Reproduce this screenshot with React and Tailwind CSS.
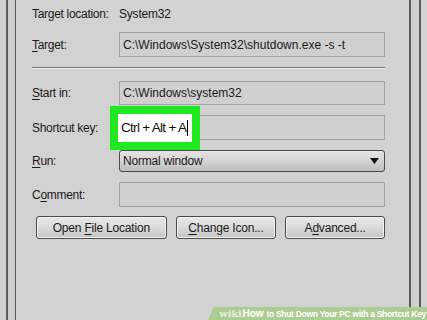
import React from 'react';

const FONT = { fontFamily: '"Liberation Sans", Arial, sans-serif' };

const Field = ({ children, className = '' }) => (
  <div className={`flex h-full w-[266px] items-center border border-[#a2a2a2] bg-[#d0d0d0] pl-[3px] text-[12px] text-[#1a1a1a] ${className}`}>
    {children}
  </div>
);

const Label = ({ children }) => (
  <div className="w-[87px] shrink-0 text-[12px] tracking-[-0.3px] text-[#1a1a1a]">{children}</div>
);

const Btn = ({ w, children }) => (
  <div
    className={`flex h-[23px] ${w} items-center justify-center rounded-[3px] border border-[#4a4a4a] bg-gradient-to-b from-[#e9e9e9] via-[#dadada] to-[#c4c4c4] text-[12px] tracking-[-0.2px] text-[#1a1a1a] shadow-[inset_0_0_0_1px_#f2f2f2]`}
  >
    <span>{children}</span>
  </div>
);

export default function App() {
  return (
    <div className="relative flex h-[320px] w-[427px] overflow-hidden bg-[#d2d2d2]" style={FONT}>
      {/* left window frame */}
      <div className="flex h-full w-[32px] shrink-0">
        <div className="w-[6px]" />
        <div className="w-[1.5px] bg-[#5a5a5a]" />
        <div className="w-[7px] bg-[#cfcfcf]" />
        <div className="w-[1.5px] bg-[#5a5a5a]" />
      </div>

      {/* dialog content */}
      <div className="flex w-[353px] shrink-0 flex-col pt-[5px]">
        <div className="flex h-[18px] items-center">
          <Label>Target location:</Label>
          <span className="text-[12px] tracking-[-0.2px] text-[#1a1a1a]">System32</span>
        </div>

        <div className="mt-[9px] flex h-[25px] items-center">
          <Label><span className="underline underline-offset-2">T</span>arget:</Label>
          <Field>C:\Windows\System32\shutdown.exe -s -t</Field>
        </div>

        <div className="mt-[10px] border-t border-b border-t-[#7a7a7a] border-b-[#ececec]" />

        <div className="mt-[12px] flex h-[24px] items-center">
          <Label><span className="underline underline-offset-2">S</span>tart in:</Label>
          <Field>C:\Windows\system32</Field>
        </div>

        <div className="relative mt-[10px] flex h-[25px] items-center">
          <Label>Shortcut key:</Label>
          <Field />
          {/* green highlight over the shortcut field */}
          <div className="absolute left-[78px] top-[-9px] h-[44px] w-[90px] bg-[#1fe81f] p-[8px]">
            <div className="flex h-full w-full items-center bg-white pl-[3px] text-[13.5px] tracking-[-0.7px] text-[#111]">
              <span className="whitespace-pre">Ctrl + Alt + A</span>
              <span className="ml-[1px] inline-block h-[16px] w-[1px] bg-black" />
            </div>
          </div>
        </div>

        <div className="mt-[10px] flex h-[22px] items-center">
          <Label><span className="underline underline-offset-2">R</span>un:</Label>
          <div className="flex h-full w-[266px] items-center justify-between rounded-[3px] border border-[#4a4a4a] bg-gradient-to-b from-[#e4e4e4] via-[#d4d4d4] to-[#bdbdbd] pl-[3px] pr-[5px] text-[12px] tracking-[-0.2px] text-[#1a1a1a]">
            <span>Normal window</span>
            <svg width="9" height="6" viewBox="0 0 9 6"><path d="M0 0h9L4.5 6z" fill="#111" /></svg>
          </div>
        </div>

        <div className="mt-[10px] flex h-[25px] items-center">
          <Label>C<span className="underline underline-offset-2">o</span>mment:</Label>
          <Field />
        </div>

        <div className="mt-[9px] flex gap-[9px] pl-[4px]">
          <Btn w="w-[131px]">Open <span className="underline underline-offset-2">F</span>ile Location</Btn>
          <Btn w="w-[101px]"><span className="underline underline-offset-2">C</span>hange Icon...</Btn>
          <Btn w="w-[100px]">A<span className="underline underline-offset-2">d</span>vanced...</Btn>
        </div>
      </div>

      {/* right window frame */}
      <div className="flex h-full flex-1">
        <div className="w-[24px]" />
        <div className="w-[1.5px] bg-[#5a5a5a]" />
        <div className="w-[8.5px] bg-[#cfcfcf]" />
        <div className="w-[1.5px] bg-[#5a5a5a]" />
      </div>

      {/* wikiHow banner */}
      <div className="absolute bottom-0 right-0 flex h-[13px] w-[219px] items-center justify-end bg-[#a9cc8e]/95 pr-[1px] [clip-path:polygon(6px_0,100%_0,100%_100%,0_100%)]">
        <span className="flex items-baseline whitespace-nowrap font-bold text-white">
          <span className="text-[10px] tracking-[-0.2px] text-[#e8eee3]" style={{ fontFamily: '"DejaVu Serif", serif' }}>wiki</span>
          <span className="ml-[1px] text-[10px] tracking-[-0.1px]">How</span>
          <span className="ml-[3px] text-[8.5px] tracking-[-0.3px]">to Shut Down Your PC with a Shortcut Key</span>
        </span>
      </div>
    </div>
  );
}
